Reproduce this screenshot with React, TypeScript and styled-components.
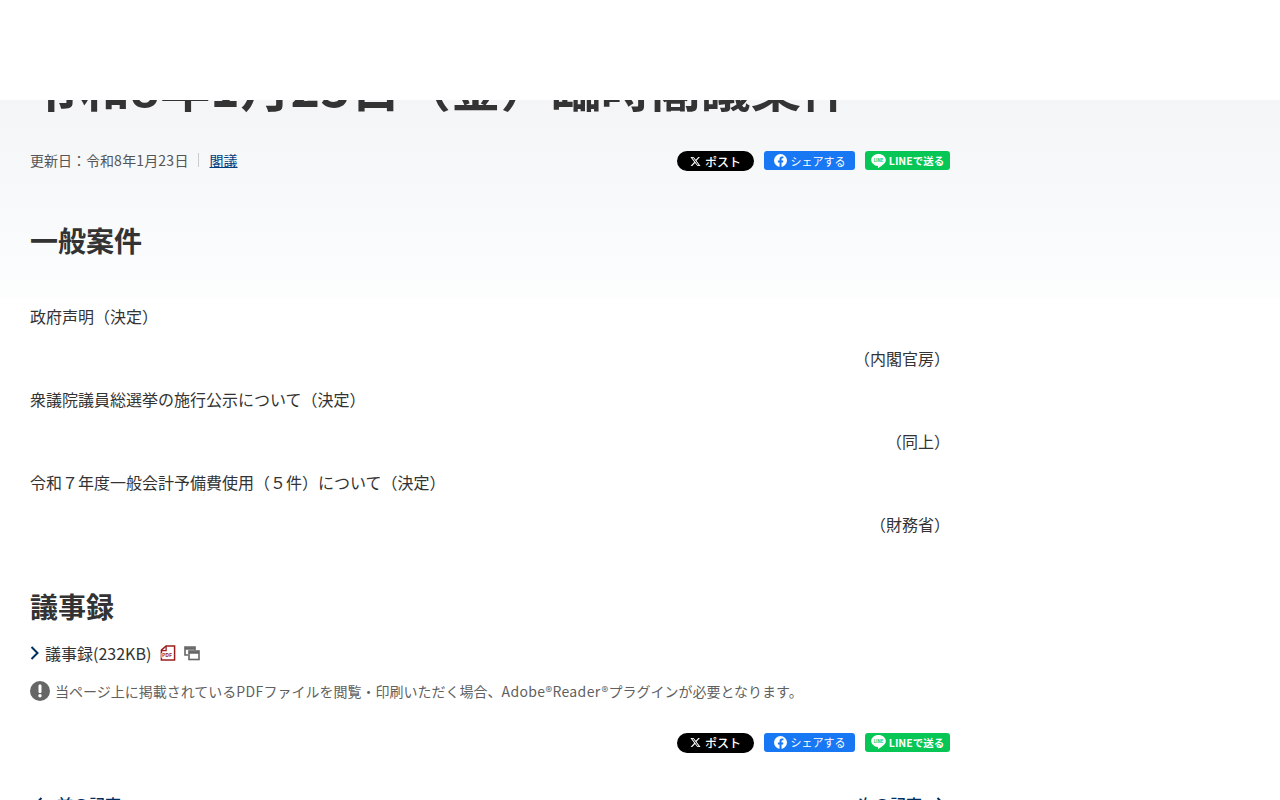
import styled, { createGlobalStyle } from "styled-components";

const GlobalStyle = createGlobalStyle`
  html, body {
    margin: 0;
    padding: 0;
    height: 100%;
    overflow: hidden;
    background: #fff;
  }
  body {
    font-family: "Noto Sans CJK JP", "Noto Sans", sans-serif;
    color: #333;
  }
`;

const Header = styled.header`
  position: fixed;
  top: 0;
  left: 0;
  right: 0;
  height: 100px;
  background: #fff;
  z-index: 10;
`;

const Page = styled.div`
  height: 800px;
  overflow: hidden;
  background: linear-gradient(#f4f5f7 100px, #f8f9fb 200px, #fcfdfd 295px, #fff 300px);
`;

const Main = styled.main`
  width: 920px;
  margin-left: 30px;
`;

const Title = styled.h1`
  margin: 0;
  padding-top: 49px;
  font-size: 50px;
  line-height: 72px;
  font-weight: 700;
  color: #333;
  white-space: nowrap;
`;

const Latin = styled.span`
  letter-spacing: 0.35px;
`;

const TitleDigit = styled.span`
  letter-spacing: 0.7px;
`;

const MetaRow = styled.div`
  display: flex;
  justify-content: space-between;
  align-items: center;
  margin-top: 24px;
  height: 32px;
`;

const Meta = styled.div`
  display: flex;
  align-items: center;
  padding-bottom: 2px;
  font-size: 14px;
  color: #555;
`;

const Divider = styled.span`
  width: 1px;
  height: 14px;
  margin: 0 11px 0 9px;
  background: #ccc;
`;

const MetaLink = styled.a`
  color: #003f7f;
  text-decoration: underline;
`;

const Share = styled.div`
  display: flex;
  align-items: flex-start;
  gap: 10px;
`;

const ShareX = styled.span`
  display: flex;
  align-items: center;
  justify-content: center;
  gap: 4px;
  width: 77px;
  height: 20px;
  border-radius: 10px;
  background: #000;
  color: #fff;
  font-size: 12px;
  font-weight: 500;
`;

const ShareFb = styled.span`
  display: flex;
  align-items: center;
  justify-content: center;
  gap: 4px;
  width: 91px;
  height: 19px;
  border-radius: 3px;
  background: #1877f2;
  color: #fff;
  font-size: 11px;
  font-weight: 400;
`;

const ShareLine = styled.span`
  display: flex;
  align-items: center;
  justify-content: center;
  gap: 3px;
  width: 85px;
  height: 19px;
  border-radius: 3px;
  background: #06c755;
  color: #fff;
  font-size: 10.5px;
  font-weight: 700;
`;

const SectionTitle = styled.h2<{ $top: number }>`
  margin: ${(p) => p.$top}px 0 0;
  font-size: 28px;
  line-height: 40px;
  font-weight: 700;
  color: #333;
`;

const Items = styled.div`
  margin-top: 36px;
  display: flex;
  flex-direction: column;
`;

const Item = styled.p<{ $right?: boolean }>`
  margin: 0;
  height: 41.6px;
  font-size: 16px;
  line-height: 41.6px;
  color: #333;
  text-align: ${(p) => (p.$right ? "right" : "left")};
`;

const FileRow = styled.div`
  display: flex;
  align-items: center;
  height: 26px;
  margin-top: 14px;
  font-size: 16px;
  color: #333;
`;

const FileName = styled.span`
  margin-left: 6px;
`;

const FileIcons = styled.span`
  display: flex;
  align-items: center;
  gap: 8px;
  margin: 1px 0 0 9px;
`;

const Note = styled.div`
  display: flex;
  align-items: center;
  gap: 5px;
  margin-top: 13px;
  height: 24px;
  font-size: 14px;
  color: #5f5f5f;
`;

const BottomShare = styled(Share)`
  justify-content: flex-end;
  margin-top: 30px;
`;

const Pager = styled.nav`
  display: flex;
  justify-content: space-between;
  margin-top: 39px;
  padding: 0 5px 0 4px;
  font-size: 16px;
  font-weight: 500;
  color: #002f5f;
`;

const PagerLink = styled.span`
  display: flex;
  align-items: center;
  gap: 14px;
`;

const XIcon = () => (
  <svg width="11" height="11" viewBox="0 0 24 24" fill="#fff">
    <path d="M18.2 2h3.4l-7.4 8.5L23 22h-6.8l-5.3-7-6.1 7H1.3l7.9-9.1L.9 2h7l4.8 6.4L18.2 2zm-1.2 18h1.9L6.9 3.9h-2L17 20z" />
  </svg>
);

const FbIcon = () => (
  <svg width="13" height="13" viewBox="0 0 24 24">
    <circle cx="12" cy="12" r="12" fill="#fff" />
    <path
      fill="#1877f2"
      d="M16.7 15.5l.5-3.5h-3.3V9.8c0-1 .5-1.9 2-1.9h1.5V5c0 0-1.4-.2-2.7-.2-2.7 0-4.5 1.7-4.5 4.6V12h-3v3.5h3V24h3.7v-8.5h2.8z"
    />
  </svg>
);

const LineIcon = () => (
  <svg width="15" height="14" viewBox="0 0 24 23">
    <path
      fill="#fff"
      d="M12 0C5.4 0 0 4.4 0 9.8c0 4.8 4.3 8.9 10.1 9.7.4.1.9.3 1.1.6.1.3.1.8 0 1.1l-.2 1c0 .3-.2 1.2 1 .6 1.300-.5 6.900-4.100 9.400-7C23.100 13.900 24 12 24 9.800 24 4.400 18.600 0 12 0z"
    />
    <text x="12" y="12.500" textAnchor="middle" fontSize="7" fontWeight="700" fill="#06c755">
      LINE
    </text>
  </svg>
);

const ShareButtons = () => (
  <>
    <ShareX>
      <XIcon />
      ポスト
    </ShareX>
    <ShareFb>
      <FbIcon />
      シェアする
    </ShareFb>
    <ShareLine>
      <LineIcon />
      LINEで送る
    </ShareLine>
  </>
);

const Chevron = ({ left = false }: { left?: boolean }) => (
  <svg width="9" height="14" viewBox="0 0 9 14" fill="none" stroke="#002f5f" strokeWidth="2">
    <path d={left ? "M7.500 1L1.500 7l6 6" : "M1.500 1l6 6-6 6"} />
  </svg>
);

const PdfIcon = () => (
  <svg width="16" height="16" viewBox="0 0 16 17">
    <path d="M1 5.500L6 1h9v15H1z" fill="#fff" stroke="#9c1f1f" strokeWidth="1.600" />
    <path d="M6 1v5H1" fill="none" stroke="#9c1f1f" strokeWidth="1.400" />
    <rect x="1" y="8.500" width="11" height="5" fill="#fff" />
    <text x="1.500" y="13" fontSize="5.500" fontWeight="700" fill="#9c1f1f">
      PDF
    </text>
  </svg>
);

const WindowIcon = () => (
  <svg width="16" height="15" viewBox="0 0 16 15" fill="none" stroke="#666" strokeWidth="1.600">
    <path d="M4 9H1V1h10v3" />
    <path d="M1 2.500h10" strokeWidth="2.500" />
    <rect x="5" y="5" width="10" height="8.500" />
    <path d="M5 6.500h10" strokeWidth="2.500" />
  </svg>
);

const AlertIcon = () => (
  <svg width="20" height="20" viewBox="0 0 20 20">
    <circle cx="10" cy="10" r="10" fill="#666" />
    <rect x="8.500" y="3.500" width="3" height="8.500" rx="1.200" fill="#fff" />
    <circle cx="10" cy="14.800" r="1.700" fill="#fff" />
  </svg>
);

const App = () => {
  return (
    <Page>
      <GlobalStyle />
      <Header />
      <Main>
        <Title>
          令和<TitleDigit>8</TitleDigit>年<TitleDigit>1</TitleDigit>月<TitleDigit>23</TitleDigit>日（金）臨時閣議案件
        </Title>
        <MetaRow>
          <Meta>
            <span>
              更新日：令和<Latin>8</Latin>年<Latin>1</Latin>月<Latin>23</Latin>日
            </span>
            <Divider />
            <MetaLink>閣議</MetaLink>
          </Meta>
          <Share>
            <ShareButtons />
          </Share>
        </MetaRow>
        <SectionTitle $top={43}>一般案件</SectionTitle>
        <Items>
          <Item>政府声明（決定）</Item>
          <Item $right>（内閣官房）</Item>
          <Item>衆議院議員総選挙の施行公示について（決定）</Item>
          <Item $right>（同上）</Item>
          <Item>令和７年度一般会計予備費使用（５件）について（決定）</Item>
          <Item $right>（財務省）</Item>
        </Items>
        <SectionTitle $top={40}>議事録</SectionTitle>
        <FileRow>
          <Chevron />
          <FileName>議事録(232KB)</FileName>
          <FileIcons>
            <PdfIcon />
            <WindowIcon />
          </FileIcons>
        </FileRow>
        <Note>
          <AlertIcon />
          <span>
            当ページ上に掲載されている<Latin>PDF</Latin>ファイルを閲覧・印刷いただく場合、
            <Latin>Adobe®Reader®</Latin>プラグインが必要となります。
          </span>
        </Note>
        <BottomShare>
          <ShareButtons />
        </BottomShare>
        <Pager>
          <PagerLink>
            <Chevron left />
            前の記事
          </PagerLink>
          <PagerLink>
            次の記事
            <Chevron />
          </PagerLink>
        </Pager>
      </Main>
    </Page>
  );
};

export default App;
